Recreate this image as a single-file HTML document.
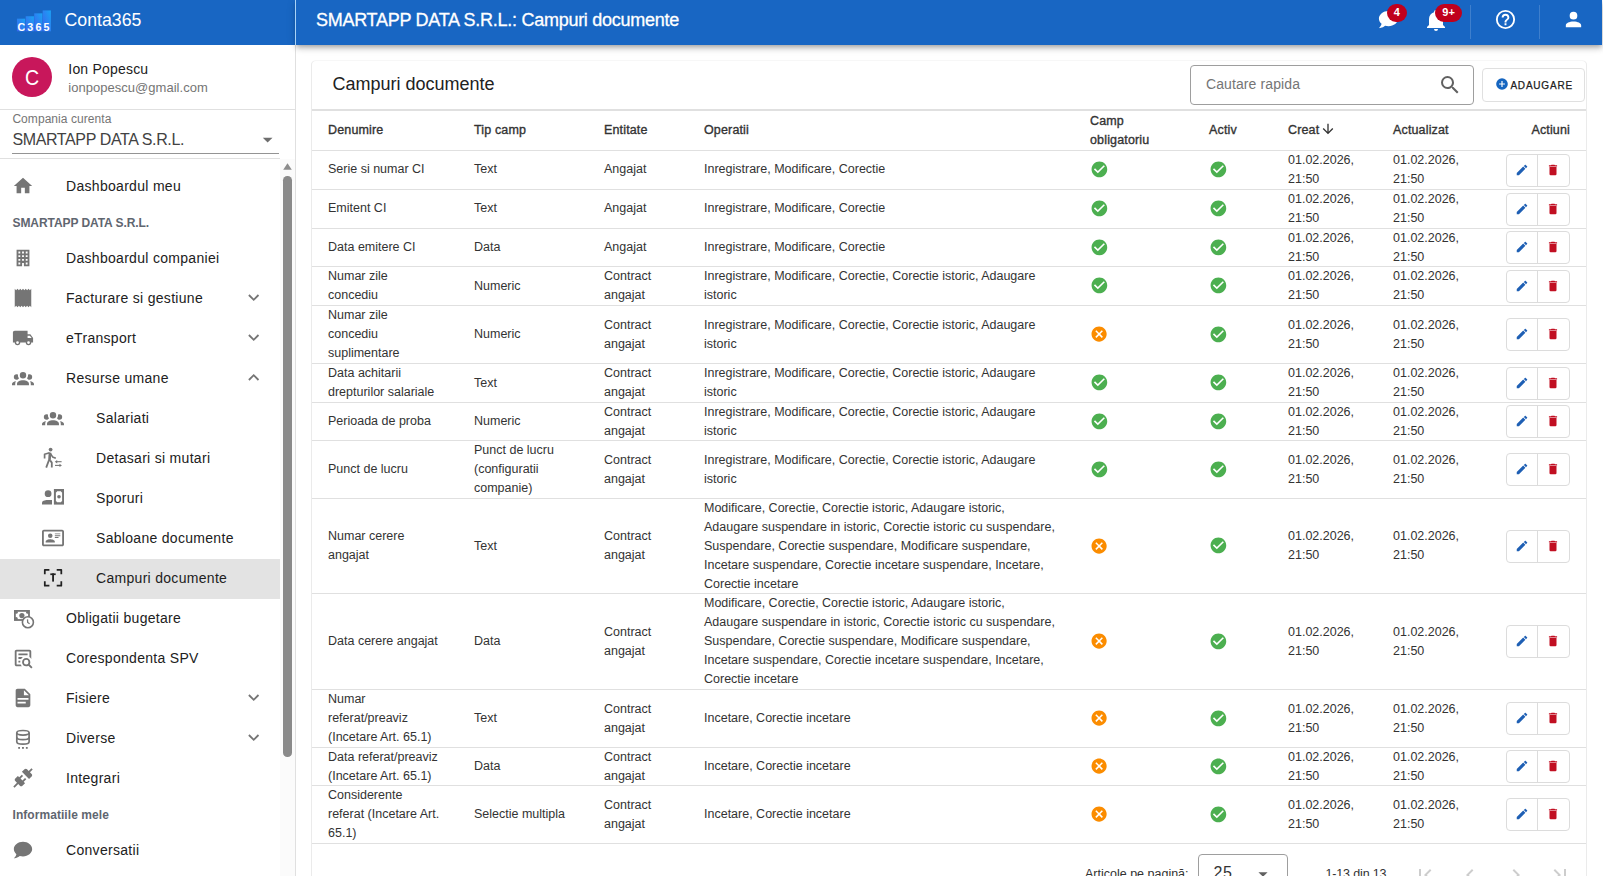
<!DOCTYPE html><html><head><meta charset="utf-8"><style>
html,body{margin:0;padding:0}
body{width:1603px;height:876px;overflow:hidden;position:relative;background:#fff;font-family:"Liberation Sans",sans-serif;}
.ic{position:absolute;display:block}
.t{position:absolute;white-space:nowrap}
.abs{position:absolute}
</style></head><body>
<div class="abs" style="left:0;top:0;width:295px;height:45px;background:#1866c3"></div>
<svg class="ic" style="left:14.9px;top:7.9px;width:36.9px;height:25.25px" viewBox="0 0 38 26">
<defs><linearGradient id="lg" x1="0" y1="1" x2="1" y2="0"><stop offset="0" stop-color="#3b62ee"/><stop offset="1" stop-color="#1aa3f5"/></linearGradient></defs>
<rect x="2" y="11" width="8.5" height="13" fill="url(#lg)"/>
<rect x="11" y="8.5" width="8.5" height="15.5" fill="url(#lg)"/>
<rect x="19.8" y="5.5" width="8.5" height="18.5" fill="url(#lg)"/>
<rect x="28.5" y="2.5" width="8.5" height="21.5" fill="url(#lg)"/>
<text x="2.6" y="23.3" font-family="Liberation Sans" font-weight="700" font-size="11" fill="#fff" letter-spacing="2.2">C365</text>
</svg>
<div class="t" style="left:64.6px;top:11.62px;font-size:17.7px;line-height:17.7px;color:#fff;font-weight:400;letter-spacing:0px;">Conta365</div>
<div class="abs" style="left:12px;top:57px;width:40px;height:40px;border-radius:50%;background:#c8175b"></div>
<div class="t" style="left:24.8px;top:65.80px;font-size:22.8px;line-height:22.8px;color:#fff;font-weight:400;letter-spacing:0px;transform:scaleX(0.86);transform-origin:0 0;">C</div>
<div class="t" style="left:68.3px;top:62.15px;font-size:14px;line-height:14px;color:#212121;font-weight:400;letter-spacing:0.2px;">Ion Popescu</div>
<div class="t" style="left:68.3px;top:81.00px;font-size:13px;line-height:13px;color:#757575;font-weight:400;letter-spacing:0.03px;">ionpopescu@gmail.com</div>
<div class="abs" style="left:0;top:109px;width:295px;height:1px;background:#e0e0e0"></div>
<div class="t" style="left:12.4px;top:112.54px;font-size:12px;line-height:12px;color:#757575;font-weight:400;letter-spacing:0.06px;">Compania curenta</div>
<div class="t" style="left:12.4px;top:132.16px;font-size:16px;line-height:16px;color:#424242;font-weight:400;letter-spacing:-0.37px;">SMARTAPP DATA S.R.L.</div>
<svg class="ic" style="left:255.5px;top:128.1px;width:23.3px;height:23.3px;" viewBox="0 0 24 24"><path fill="#6e6e6e" d="M7,10L12,15L17,10H7Z"/></svg>
<div class="abs" style="left:12px;top:153px;width:267px;height:1px;background:#949494"></div>
<div class="abs" style="left:0;top:158px;width:280px;height:1px;background:#e0e0e0"></div>
<div class="abs" style="left:295px;top:0;width:1px;height:876px;background:#e0e0e0"></div>
<div class="abs" style="left:295px;top:0;width:1px;height:45px;background:#a9d3f7;z-index:5"></div>
<div class="abs" style="left:280px;top:159px;width:15px;height:717px;background:#fbfbfb"></div>
<svg class="ic" style="left:283px;top:163px;width:9px;height:7px" viewBox="0 0 9 7"><path d="M4.5,0.3L8.8,6.7H0.2Z" fill="#8c8c8c"/></svg>
<div class="abs" style="left:283px;top:176px;width:8.6px;height:581px;border-radius:4.3px;background:#8a8a8a"></div>
<div class="abs" style="left:0;top:559px;width:280px;height:40px;background:#e3e3e3"></div>
<svg class="ic" style="left:12px;top:175px;width:22px;height:22px;" viewBox="0 0 24 24"><path fill="#757575" d="M10,20V14H14V20H19V12H22L12,3L2,12H5V20H10Z"/></svg>
<div class="t" style="left:66px;top:179.25px;font-size:14px;line-height:14px;color:#212121;font-weight:400;letter-spacing:0.3px;">Dashboardul meu</div>
<svg class="ic" style="left:12px;top:247px;width:22px;height:22px;" viewBox="0 0 24 24"><path fill="#757575" d="M5,3V21H11V17.5H13V21H19V3H5M7,5H9V7H7V5M11,5H13V7H11V5M15,5H17V7H15V5M7,9H9V11H7V9M11,9H13V11H11V9M15,9H17V11H15V9M7,13H9V15H7V13M11,13H13V15H11V13M15,13H17V15H15V13M7,17H9V19H7V17M15,17H17V19H15V17Z"/></svg>
<div class="t" style="left:66px;top:251.25px;font-size:14px;line-height:14px;color:#212121;font-weight:400;letter-spacing:0.3px;">Dashboardul companiei</div>
<svg class="ic" style="left:12px;top:287px;width:22px;height:22px;" viewBox="0 0 24 24"><path fill="#757575" d="M3,22L4.5,20.5L6,22L7.5,20.5L9,22L10.5,20.5L12,22L13.5,20.5L15,22L16.5,20.5L18,22L19.5,20.5L21,22V2L19.5,3.5L18,2L16.5,3.5L15,2L13.5,3.5L12,2L10.5,3.5L9,2L7.5,3.5L6,2L4.5,3.5L3,2V22Z"/></svg>
<div class="t" style="left:66px;top:291.25px;font-size:14px;line-height:14px;color:#212121;font-weight:400;letter-spacing:0.3px;">Facturare si gestiune</div>
<svg class="ic" style="left:0;top:0;width:295px;height:876px;overflow:visible" viewBox="0 0 295 876"><polyline points="248.9,295.0 253.7,299.8 258.5,295.0" fill="none" stroke="#757575" stroke-width="1.85"/></svg>
<svg class="ic" style="left:12px;top:327px;width:22px;height:22px;" viewBox="0 0 24 24"><path fill="#757575" d="M18,18.5A1.5,1.5 0 0,1 16.5,17A1.5,1.5 0 0,1 18,15.5A1.5,1.5 0 0,1 19.5,17A1.5,1.5 0 0,1 18,18.5M19.5,9.5L21.46,12H17V9.5M6,18.5A1.5,1.5 0 0,1 4.5,17A1.5,1.5 0 0,1 6,15.5A1.5,1.5 0 0,1 7.5,17A1.5,1.5 0 0,1 6,18.5M20,8H17V4H3C1.89,4 1,4.89 1,6V17H3A3,3 0 0,0 6,20A3,3 0 0,0 9,17H15A3,3 0 0,0 18,20A3,3 0 0,0 21,17H23V12L20,8Z"/></svg>
<div class="t" style="left:66px;top:331.25px;font-size:14px;line-height:14px;color:#212121;font-weight:400;letter-spacing:0.3px;">eTransport</div>
<svg class="ic" style="left:0;top:0;width:295px;height:876px;overflow:visible" viewBox="0 0 295 876"><polyline points="248.9,335.0 253.7,339.8 258.5,335.0" fill="none" stroke="#757575" stroke-width="1.85"/></svg>
<svg class="ic" style="left:12px;top:367px;width:22px;height:22px;" viewBox="0 0 24 24"><path fill="#757575" d="M12,5.5A3.5,3.5 0 0,1 15.5,9A3.5,3.5 0 0,1 12,12.5A3.5,3.5 0 0,1 8.5,9A3.5,3.5 0 0,1 12,5.5M5,8C5.56,8 6.08,8.15 6.53,8.42C6.38,9.85 6.8,11.27 7.66,12.38C7.16,13.34 6.16,14 5,14A3,3 0 0,1 2,11A3,3 0 0,1 5,8M19,8A3,3 0 0,1 22,11A3,3 0 0,1 19,14C17.84,14 16.84,13.34 16.34,12.38C17.2,11.27 17.62,9.85 17.47,8.42C17.92,8.15 18.44,8 19,8M5.5,18.25C5.5,16.18 8.41,14.5 12,14.5C15.59,14.5 18.5,16.18 18.5,18.25V20H5.5V18.25M0,20V18.5C0,17.11 1.89,15.94 4.45,15.6C3.86,16.28 3.5,17.22 3.5,18.25V20H0M24,20H20.5V18.25C20.5,17.22 20.14,16.28 19.55,15.6C22.11,15.94 24,17.11 24,18.5V20Z"/></svg>
<div class="t" style="left:66px;top:371.25px;font-size:14px;line-height:14px;color:#212121;font-weight:400;letter-spacing:0.3px;">Resurse umane</div>
<svg class="ic" style="left:0;top:0;width:295px;height:876px;overflow:visible" viewBox="0 0 295 876"><polyline points="248.9,380.0 253.7,375.2 258.5,380.0" fill="none" stroke="#757575" stroke-width="1.85"/></svg>
<svg class="ic" style="left:42px;top:407px;width:22px;height:22px;" viewBox="0 0 24 24"><path fill="#757575" d="M12,5.5A3.5,3.5 0 0,1 15.5,9A3.5,3.5 0 0,1 12,12.5A3.5,3.5 0 0,1 8.5,9A3.5,3.5 0 0,1 12,5.5M5,8C5.56,8 6.08,8.15 6.53,8.42C6.38,9.85 6.8,11.27 7.66,12.38C7.16,13.34 6.16,14 5,14A3,3 0 0,1 2,11A3,3 0 0,1 5,8M19,8A3,3 0 0,1 22,11A3,3 0 0,1 19,14C17.84,14 16.84,13.34 16.34,12.38C17.2,11.27 17.62,9.85 17.47,8.42C17.92,8.15 18.44,8 19,8M5.5,18.25C5.5,16.18 8.41,14.5 12,14.5C15.59,14.5 18.5,16.18 18.5,18.25V20H5.5V18.25M0,20V18.5C0,17.11 1.89,15.94 4.45,15.6C3.86,16.28 3.5,17.22 3.5,18.25V20H0M24,20H20.5V18.25C20.5,17.22 20.14,16.28 19.55,15.6C22.11,15.94 24,17.11 24,18.5V20Z"/></svg>
<div class="t" style="left:96px;top:411.25px;font-size:14px;line-height:14px;color:#212121;font-weight:400;letter-spacing:0.3px;">Salariati</div>
<svg class="ic" style="left:0;top:0;width:295px;height:876px" viewBox="0 0 295 876"><circle cx="50.6" cy="449.6" r="1.9" fill="#757575"/>
<g fill="none" stroke="#757575" stroke-linejoin="round" stroke-linecap="butt">
<polyline points="44.6,458.5 44.6,454.2 49.6,452.8" stroke-width="1.7"/>
<polyline points="50.2,453.2 52.6,456.9 55.8,458.3" stroke-width="1.6"/>
<line x1="50" y1="452.6" x2="49.4" y2="461.2" stroke-width="2.6"/>
<polyline points="48.8,460.6 46.2,467.6" stroke-width="1.8"/>
<polyline points="50.3,460.6 51.8,462.6 51.8,467.6" stroke-width="1.8"/>
<line x1="56.6" y1="461.7" x2="61.6" y2="461.7" stroke-width="1.1"/>
<line x1="55" y1="465.4" x2="60.2" y2="465.4" stroke-width="1.1"/>
</g>
<path d="M54.8,461.7L57.2,460V463.4Z M61.9,465.4L59.5,463.7V467.1Z" fill="#757575"/></svg>
<div class="t" style="left:96px;top:451.25px;font-size:14px;line-height:14px;color:#212121;font-weight:400;letter-spacing:0.3px;">Detasari si mutari</div>
<svg class="ic" style="left:0;top:0;width:295px;height:876px" viewBox="0 0 295 876"><circle cx="48.1" cy="493.7" r="3.4" fill="#757575"/>
<path d="M42,504.6V502.8C42,500.8 44.6,499.9 47.5,499.9H52V504.6Z" fill="#757575"/>
<rect x="53.9" y="489" width="10.1" height="15.6" fill="#757575"/>
<path d="M55.9,492.4Q57,492.4 57,491.3H61Q61,492.4 62.1,492.4V501.2Q61,501.2 61,502.3H57Q57,501.2 55.9,501.2Z" fill="#fff"/>
<circle cx="59" cy="496.8" r="1.8" fill="#757575"/></svg>
<div class="t" style="left:96px;top:491.25px;font-size:14px;line-height:14px;color:#212121;font-weight:400;letter-spacing:0.3px;">Sporuri</div>
<svg class="ic" style="left:42px;top:527px;width:22px;height:22px;" viewBox="0 0 24 24"><path fill="#757575" d="M22,3H2C0.91,3.04 0.04,3.91 0,5V19C0.04,20.09 0.91,20.96 2,21H22C23.09,20.96 23.96,20.09 24,19V5C23.96,3.91 23.09,3.04 22,3M22,19H2V5H22V19M14,17V15.75C14,14.09 10.66,13.25 9,13.25C7.34,13.25 4,14.09 4,15.75V17H14M9,7A2.5,2.5 0 0,0 6.5,9.5A2.5,2.5 0 0,0 9,12A2.5,2.5 0 0,0 11.5,9.5A2.5,2.5 0 0,0 9,7M14,7V8H20V7H14M14,9V10H20V9H14M14,11V12H18V11H14Z"/></svg>
<div class="t" style="left:96px;top:531.25px;font-size:14px;line-height:14px;color:#212121;font-weight:400;letter-spacing:0.3px;">Sabloane documente</div>
<svg class="ic" style="left:0;top:0;width:295px;height:876px" viewBox="0 0 295 876"><g fill="none" stroke="#212121" stroke-width="1.75" stroke-linecap="butt" stroke-linejoin="round">
<path d="M44.8,574.3V569.8H49.4"/><path d="M56.7,569.8H61.3V574.3"/>
<path d="M44.8,581.2V585.7H49.4"/><path d="M56.7,585.7H61.3V581.2"/></g>
<rect x="50.3" y="573.4" width="5.4" height="1.7" fill="#212121"/><rect x="52.15" y="573.4" width="1.85" height="8.2" fill="#212121"/></svg>
<div class="t" style="left:96px;top:571.25px;font-size:14px;line-height:14px;color:#212121;font-weight:400;letter-spacing:0.3px;">Campuri documente</div>
<svg class="ic" style="left:0;top:0;width:295px;height:876px" viewBox="0 0 295 876"><rect x="14.9" y="610.9" width="14.1" height="9.1" fill="none" stroke="#757575" stroke-width="1.8"/>
<circle cx="16.2" cy="612.2" r="1.6" fill="#757575"/><circle cx="27.7" cy="612.2" r="1.6" fill="#757575"/><circle cx="16.2" cy="618.7" r="1.6" fill="#757575"/>
<circle cx="21.9" cy="615.6" r="2.6" fill="#757575"/>
<circle cx="27.9" cy="622.2" r="5.5" fill="#fff" stroke="#757575" stroke-width="1.6"/>
<polyline points="27.5,619.4 27.7,622.5 29.6,623.7" fill="none" stroke="#757575" stroke-width="1.3"/></svg>
<div class="t" style="left:66px;top:611.25px;font-size:14px;line-height:14px;color:#212121;font-weight:400;letter-spacing:0.3px;">Obligatii bugetare</div>
<svg class="ic" style="left:12px;top:647px;width:22px;height:22px;" viewBox="0 0 24 24"><path fill="#757575" d="M15.5,12C18,12 20,14 20,16.5C20,17.38 19.75,18.21 19.31,18.9L22.39,22L21,23.39L17.88,20.32C17.19,20.75 16.37,21 15.5,21C13,21 11,19 11,16.5C11,14 13,12 15.5,12M15.5,14A2.5,2.5 0 0,0 13,16.5A2.5,2.5 0 0,0 15.5,19A2.5,2.5 0 0,0 18,16.5A2.5,2.5 0 0,0 15.5,14M5,3H19C20.11,3 21,3.89 21,5V13.03C20.5,12.23 19.81,11.54 19,11V5H5V19H9.5C9.81,19.75 10.26,20.42 10.81,21H5C3.89,21 3,20.11 3,19V5C3,3.89 3.89,3 5,3M7,7H17V9H7V7M7,11H12.03C11.23,11.5 10.54,12.19 10,13H7V11M7,15H9.17C9.06,15.5 9,16 9,16.5V17H7V15Z"/></svg>
<div class="t" style="left:66px;top:651.25px;font-size:14px;line-height:14px;color:#212121;font-weight:400;letter-spacing:0.3px;">Corespondenta SPV</div>
<svg class="ic" style="left:12px;top:687px;width:22px;height:22px;" viewBox="0 0 24 24"><path fill="#757575" d="M6,2H14L20,8V20A2,2 0 0,1 18,22H6C4.89,22 4,21.1 4,20V4C4,2.89 4.89,2 6,2M13,3.5V9H18.5L13,3.5M15,18V16H6V18H15M18,14V12H6V14H18Z"/></svg>
<div class="t" style="left:66px;top:691.25px;font-size:14px;line-height:14px;color:#212121;font-weight:400;letter-spacing:0.3px;">Fisiere</div>
<svg class="ic" style="left:0;top:0;width:295px;height:876px;overflow:visible" viewBox="0 0 295 876"><polyline points="248.9,695.0 253.7,699.8 258.5,695.0" fill="none" stroke="#757575" stroke-width="1.85"/></svg>
<svg class="ic" style="left:0;top:0;width:295px;height:876px" viewBox="0 0 295 876"><g fill="none" stroke="#757575" stroke-width="1.7">
<ellipse cx="22.95" cy="732.8" rx="6.15" ry="2.3"/>
<path d="M16.8,732.8V741.8A6.15,2.4 0 0 0 29.1,741.8V732.8"/>
<path d="M16.8,737.2A6.15,2.4 0 0 0 29.1,737.2"/></g>
<rect x="18.2" y="747" width="1.8" height="1.8" fill="#757575"/><rect x="22" y="747" width="1.9" height="1.8" fill="#757575"/><rect x="25.9" y="747" width="1.8" height="1.8" fill="#757575"/></svg>
<div class="t" style="left:66px;top:731.25px;font-size:14px;line-height:14px;color:#212121;font-weight:400;letter-spacing:0.3px;">Diverse</div>
<svg class="ic" style="left:0;top:0;width:295px;height:876px;overflow:visible" viewBox="0 0 295 876"><polyline points="248.9,735.0 253.7,739.8 258.5,735.0" fill="none" stroke="#757575" stroke-width="1.85"/></svg>
<svg class="ic" style="left:12px;top:767px;width:22px;height:22px;" viewBox="0 0 24 24"><path fill="#757575" d="M21.4,7.5C22.2,8.3 22.2,9.6 21.4,10.3L18.6,13.1L10.8,5.3L13.6,2.5C14.4,1.7 15.7,1.7 16.4,2.5L18.2,4.3L21.2,1.3L22.6,2.7L19.6,5.7L21.4,7.5M15.6,13.3L14.2,11.9L11.4,14.7L9.3,12.6L12.1,9.8L10.7,8.4L7.9,11.2L6.4,9.8L3.6,12.6C2.8,13.4 2.8,14.7 3.6,15.4L5.4,17.2L1.4,21.2L2.8,22.6L6.8,18.6L8.6,20.4C9.4,21.2 10.7,21.2 11.4,20.4L14.2,17.6L12.8,16.2L15.6,13.3Z"/></svg>
<div class="t" style="left:66px;top:771.25px;font-size:14px;line-height:14px;color:#212121;font-weight:400;letter-spacing:0.3px;">Integrari</div>
<svg class="ic" style="left:12px;top:839px;width:22px;height:22px;" viewBox="0 0 24 24"><path fill="#757575" d="M12,3C17.5,3 22,6.58 22,11C22,15.42 17.5,19 12,19C10.76,19 9.57,18.82 8.47,18.5C5.55,21 2,21 2,21C4.33,18.67 4.7,17.1 4.75,16.5C3.05,15.07 2,13.13 2,11C2,6.58 6.5,3 12,3Z"/></svg>
<div class="t" style="left:66px;top:843.25px;font-size:14px;line-height:14px;color:#212121;font-weight:400;letter-spacing:0.3px;">Conversatii</div>
<div class="t" style="left:12.5px;top:216.64px;font-size:12px;line-height:12px;color:#5f6670;font-weight:700;letter-spacing:-0.07px;">SMARTAPP DATA S.R.L.</div>
<div class="t" style="left:12.5px;top:808.54px;font-size:12px;line-height:12px;color:#5f6670;font-weight:700;letter-spacing:0.06px;">Informatiile mele</div>
<div class="abs" style="left:296px;top:0;width:1306px;height:45px;background:#1866c3;box-shadow:0 2px 4px -1px rgba(0,0,0,.2),0 4px 5px 0 rgba(0,0,0,.14),0 1px 10px 0 rgba(0,0,0,.12);z-index:2"></div>
<div style="position:absolute;left:0;top:0;z-index:3">
<div class="t" style="left:316px;top:10.56px;font-size:18px;line-height:18px;color:#fff;font-weight:400;letter-spacing:-0.27px;-webkit-text-stroke:0.3px #fff;">SMARTAPP DATA S.R.L.: Campuri documente</div>
<svg class="ic" style="left:1376.8px;top:8.0px;width:23px;height:23px;" viewBox="0 0 24 24"><path fill="#fff" d="M12,3C17.5,3 22,6.58 22,11C22,15.42 17.5,19 12,19C10.76,19 9.57,18.82 8.47,18.5C5.55,21 2,21 2,21C4.33,18.67 4.7,17.1 4.75,16.5C3.05,15.07 2,13.13 2,11C2,6.58 6.5,3 12,3Z"/></svg>
<div class="abs" style="left:1387.2px;top:3.7px;width:19.6px;height:18.4px;border-radius:9.2px;background:#c0001c;color:#fff;font-size:11px;font-weight:700;text-align:center;line-height:16.6px;text-indent:-0.6px">4</div>
<svg class="ic" style="left:1424px;top:8px;width:24px;height:24px;" viewBox="0 0 24 24"><path fill="#fff" d="M21,19V20H3V19L5,17V11C5,7.9 7.03,5.17 10,4.29C10,4.19 10,4.1 10,4A2,2 0 0,1 12,2A2,2 0 0,1 14,4C14,4.1 14,4.19 14,4.29C16.97,5.17 19,7.9 19,11V17L21,19M14,21A2,2 0 0,1 12,23A2,2 0 0,1 10,21"/></svg>
<div class="abs" style="left:1435.2px;top:3.7px;width:26.8px;height:18.4px;border-radius:9.2px;background:#c0001c;color:#fff;font-size:11px;font-weight:700;text-align:center;line-height:16.6px">9+</div>
<div class="abs" style="left:1470px;top:4.5px;width:1px;height:34.5px;background:rgba(255,255,255,.17)"></div>
<svg class="ic" style="left:1493.8px;top:8.1px;width:23px;height:23px;" viewBox="0 0 24 24"><path fill="#fff" d="M11,18H13V16H11V18M12,2A10,10 0 0,0 2,12A10,10 0 0,0 12,22A10,10 0 0,0 22,12A10,10 0 0,0 12,2M12,20C7.59,20 4,16.41 4,12C4,7.59 7.59,4 12,4C16.41,4 20,7.59 20,12C20,16.41 16.41,20 12,20M12,6A4,4 0 0,0 8,10H10A2,2 0 0,1 12,8A2,2 0 0,1 14,10C14,12 11,11.75 11,15H13C13,12.75 16,12.5 16,10A4,4 0 0,0 12,6Z"/></svg>
<div class="abs" style="left:1539px;top:4.5px;width:1px;height:34.5px;background:rgba(255,255,255,.17)"></div>
<svg class="ic" style="left:1562.2px;top:8.1px;width:23px;height:23px;" viewBox="0 0 24 24"><path fill="#fff" d="M12,4A4,4 0 0,1 16,8A4,4 0 0,1 12,12A4,4 0 0,1 8,8A4,4 0 0,1 12,4M12,14C16.42,14 20,15.79 20,18V20H4V18C4,15.79 7.58,14 12,14Z"/></svg>
</div>
<div class="abs" style="left:312px;top:61px;width:1274px;height:830px;border-radius:4px;background:#fff;box-shadow:-1px 0 0 #ebebeb,1px 0 0 #ebebeb,0 -1px 0 #f7f7f7"></div>
<div class="t" style="left:332.5px;top:74.66px;font-size:18px;line-height:18px;color:#212121;font-weight:400;letter-spacing:0px;">Campuri documente</div>
<div class="abs" style="left:1190px;top:65px;width:282px;height:38px;border:1px solid #9e9e9e;border-radius:4px"></div>
<div class="t" style="left:1206px;top:77.15px;font-size:14px;line-height:14px;color:#757575;font-weight:400;letter-spacing:0.1px;">Cautare rapida</div>
<svg class="ic" style="left:1438px;top:73px;width:24px;height:24px;" viewBox="0 0 24 24"><path fill="#616161" d="M9.5,3A6.5,6.5 0 0,1 16,9.5C16,11.11 15.41,12.59 14.44,13.73L14.71,14H15.5L20.5,19L19,20.5L14,15.5V14.71L13.73,14.44C12.59,15.41 11.11,16 9.5,16A6.5,6.5 0 0,1 3,9.5A6.5,6.5 0 0,1 9.5,3M9.5,5C7,5 5,7 5,9.5C5,12 7,14 9.5,14C12,14 14,12 14,9.5C14,7 12,5 9.5,5Z"/></svg>
<div class="abs" style="left:1482px;top:68px;width:101px;height:32px;border:1px solid #e0e0e0;border-radius:4px"></div>
<svg class="ic" style="left:1494.9px;top:76.9px;width:14px;height:14px;" viewBox="0 0 24 24"><path fill="#1565c0" d="M17,13H13V17H11V13H7V11H11V7H13V11H17M12,2A10,10 0 0,0 2,12A10,10 0 0,0 12,22A10,10 0 0,0 22,12A10,10 0 0,0 12,2Z"/></svg>
<div class="t" style="left:1510.4px;top:81.13px;font-size:10px;line-height:10px;color:#212121;font-weight:400;letter-spacing:0.8px;-webkit-text-stroke:0.25px #212121;">ADAUGARE</div>
<div class="abs" style="left:312px;top:109px;width:1274px;height:2px;background:#e0e0e0"></div>
<div class="abs" style="left:328px;top:111px;height:39px;display:flex;align-items:center;white-space:nowrap;font-size:12.5px;line-height:19px;color:#333;-webkit-text-stroke:0.35px #333;letter-spacing:0.15px"><div>Denumire</div></div>
<div class="abs" style="left:474px;top:111px;height:39px;display:flex;align-items:center;white-space:nowrap;font-size:12.5px;line-height:19px;color:#333;-webkit-text-stroke:0.35px #333;letter-spacing:0.15px"><div>Tip camp</div></div>
<div class="abs" style="left:604px;top:111px;height:39px;display:flex;align-items:center;white-space:nowrap;font-size:12.5px;line-height:19px;color:#333;-webkit-text-stroke:0.35px #333;letter-spacing:0.15px"><div>Entitate</div></div>
<div class="abs" style="left:704px;top:111px;height:39px;display:flex;align-items:center;white-space:nowrap;font-size:12.5px;line-height:19px;color:#333;-webkit-text-stroke:0.35px #333;letter-spacing:0.15px"><div>Operatii</div></div>
<div class="abs" style="left:1090px;top:111px;height:39px;display:flex;align-items:center;white-space:nowrap;font-size:12.5px;line-height:19px;color:#333;-webkit-text-stroke:0.35px #333;letter-spacing:0.15px"><div>Camp<br>obligatoriu</div></div>
<div class="abs" style="left:1209px;top:111px;height:39px;display:flex;align-items:center;white-space:nowrap;font-size:12.5px;line-height:19px;color:#333;-webkit-text-stroke:0.35px #333;letter-spacing:0.15px"><div>Activ</div></div>
<div class="abs" style="left:1288px;top:111px;height:39px;display:flex;align-items:center;white-space:nowrap;font-size:12.5px;line-height:19px;color:#333;-webkit-text-stroke:0.35px #333;letter-spacing:0.15px"><div>Creat</div></div>
<div class="abs" style="left:1393px;top:111px;height:39px;display:flex;align-items:center;white-space:nowrap;font-size:12.5px;line-height:19px;color:#333;-webkit-text-stroke:0.35px #333;letter-spacing:0.15px"><div>Actualizat</div></div>
<svg class="ic" style="left:1320px;top:121px;width:16px;height:16px;" viewBox="0 0 24 24"><path fill="#333" d="M11,4H13V16L18.5,10.5L19.92,11.92L12,19.84L4.08,11.92L5.5,10.5L11,16V4Z"/></svg>
<div class="abs" style="left:1470px;top:111px;width:100px;height:39px;display:flex;align-items:center;justify-content:flex-end;white-space:nowrap;font-size:12.5px;line-height:19px;color:#333;-webkit-text-stroke:0.35px #333;letter-spacing:0.15px">Actiuni</div>
<div class="abs" style="left:312px;top:150px;width:1274px;height:1px;background:#e0e0e0"></div>
<div class="abs" style="left:328px;top:150px;height:38px;display:flex;align-items:center;white-space:nowrap;font-size:12.5px;line-height:19px;color:#333"><div>Serie si numar CI</div></div>
<div class="abs" style="left:474px;top:150px;height:38px;display:flex;align-items:center;white-space:nowrap;font-size:12.5px;line-height:19px;color:#333"><div>Text</div></div>
<div class="abs" style="left:604px;top:150px;height:38px;display:flex;align-items:center;white-space:nowrap;font-size:12.5px;line-height:19px;color:#333"><div>Angajat</div></div>
<div class="abs" style="left:704px;top:150px;height:38px;display:flex;align-items:center;white-space:nowrap;font-size:12.5px;line-height:19px;color:#333"><div>Inregistrare, Modificare, Corectie</div></div>
<svg class="ic" style="left:1089.8999999999999px;top:160.4px;width:18.8px;height:18.8px;" viewBox="0 0 24 24"><path fill="#4caf50" d="M12 2C6.5 2 2 6.5 2 12S6.5 22 12 22 22 17.5 22 12 17.5 2 12 2M10 17L5 12L6.41 10.59L10 14.17L17.59 6.58L19 8L10 17Z"/></svg>
<svg class="ic" style="left:1209.1px;top:160.4px;width:18.8px;height:18.8px;" viewBox="0 0 24 24"><path fill="#4caf50" d="M12 2C6.5 2 2 6.5 2 12S6.5 22 12 22 22 17.5 22 12 17.5 2 12 2M10 17L5 12L6.41 10.59L10 14.17L17.59 6.58L19 8L10 17Z"/></svg>
<div class="abs" style="left:1288px;top:151px;height:38px;display:flex;align-items:center;white-space:nowrap;font-size:12.5px;line-height:19px;color:#333"><div>01.02.2026,<br>21:50</div></div>
<div class="abs" style="left:1393px;top:151px;height:38px;display:flex;align-items:center;white-space:nowrap;font-size:12.5px;line-height:19px;color:#333"><div>01.02.2026,<br>21:50</div></div>
<div class="abs" style="left:1506px;top:153.5px;width:62px;height:31px;border:1px solid #dcdcdc;border-radius:4px"></div>
<div class="abs" style="left:1537px;top:153.5px;width:1px;height:33px;background:#dcdcdc"></div>
<svg class="ic" style="left:1515px;top:162.5px;width:14px;height:14px;" viewBox="0 0 24 24"><path fill="#1e5fb4" d="M20.71,7.04C21.1,6.65 21.1,6 20.71,5.63L18.37,3.29C18,2.9 17.35,2.9 16.96,3.29L15.12,5.12L18.87,8.87M3,17.25V21H6.75L17.81,9.93L14.06,6.18L3,17.25Z"/></svg>
<svg class="ic" style="left:1546px;top:162.5px;width:14px;height:14px;" viewBox="0 0 24 24"><path fill="#c10f22" d="M19,4H15.5L14.5,3H9.5L8.5,4H5V6H19M6,19A2,2 0 0,0 8,21H16A2,2 0 0,0 18,19V7H6V19Z"/></svg>
<div class="abs" style="left:312px;top:189px;width:1274px;height:1px;background:#e0e0e0"></div>
<div class="abs" style="left:328px;top:189px;height:38px;display:flex;align-items:center;white-space:nowrap;font-size:12.5px;line-height:19px;color:#333"><div>Emitent CI</div></div>
<div class="abs" style="left:474px;top:189px;height:38px;display:flex;align-items:center;white-space:nowrap;font-size:12.5px;line-height:19px;color:#333"><div>Text</div></div>
<div class="abs" style="left:604px;top:189px;height:38px;display:flex;align-items:center;white-space:nowrap;font-size:12.5px;line-height:19px;color:#333"><div>Angajat</div></div>
<div class="abs" style="left:704px;top:189px;height:38px;display:flex;align-items:center;white-space:nowrap;font-size:12.5px;line-height:19px;color:#333"><div>Inregistrare, Modificare, Corectie</div></div>
<svg class="ic" style="left:1089.8999999999999px;top:199.4px;width:18.8px;height:18.8px;" viewBox="0 0 24 24"><path fill="#4caf50" d="M12 2C6.5 2 2 6.5 2 12S6.5 22 12 22 22 17.5 22 12 17.5 2 12 2M10 17L5 12L6.41 10.59L10 14.17L17.59 6.58L19 8L10 17Z"/></svg>
<svg class="ic" style="left:1209.1px;top:199.4px;width:18.8px;height:18.8px;" viewBox="0 0 24 24"><path fill="#4caf50" d="M12 2C6.5 2 2 6.5 2 12S6.5 22 12 22 22 17.5 22 12 17.5 2 12 2M10 17L5 12L6.41 10.59L10 14.17L17.59 6.58L19 8L10 17Z"/></svg>
<div class="abs" style="left:1288px;top:190px;height:38px;display:flex;align-items:center;white-space:nowrap;font-size:12.5px;line-height:19px;color:#333"><div>01.02.2026,<br>21:50</div></div>
<div class="abs" style="left:1393px;top:190px;height:38px;display:flex;align-items:center;white-space:nowrap;font-size:12.5px;line-height:19px;color:#333"><div>01.02.2026,<br>21:50</div></div>
<div class="abs" style="left:1506px;top:192.5px;width:62px;height:31px;border:1px solid #dcdcdc;border-radius:4px"></div>
<div class="abs" style="left:1537px;top:192.5px;width:1px;height:33px;background:#dcdcdc"></div>
<svg class="ic" style="left:1515px;top:201.5px;width:14px;height:14px;" viewBox="0 0 24 24"><path fill="#1e5fb4" d="M20.71,7.04C21.1,6.65 21.1,6 20.71,5.63L18.37,3.29C18,2.9 17.35,2.9 16.96,3.29L15.12,5.12L18.87,8.87M3,17.25V21H6.75L17.81,9.93L14.06,6.18L3,17.25Z"/></svg>
<svg class="ic" style="left:1546px;top:201.5px;width:14px;height:14px;" viewBox="0 0 24 24"><path fill="#c10f22" d="M19,4H15.5L14.5,3H9.5L8.5,4H5V6H19M6,19A2,2 0 0,0 8,21H16A2,2 0 0,0 18,19V7H6V19Z"/></svg>
<div class="abs" style="left:312px;top:228px;width:1274px;height:1px;background:#e0e0e0"></div>
<div class="abs" style="left:328px;top:229px;height:37px;display:flex;align-items:center;white-space:nowrap;font-size:12.5px;line-height:19px;color:#333"><div>Data emitere CI</div></div>
<div class="abs" style="left:474px;top:229px;height:37px;display:flex;align-items:center;white-space:nowrap;font-size:12.5px;line-height:19px;color:#333"><div>Data</div></div>
<div class="abs" style="left:604px;top:229px;height:37px;display:flex;align-items:center;white-space:nowrap;font-size:12.5px;line-height:19px;color:#333"><div>Angajat</div></div>
<div class="abs" style="left:704px;top:229px;height:37px;display:flex;align-items:center;white-space:nowrap;font-size:12.5px;line-height:19px;color:#333"><div>Inregistrare, Modificare, Corectie</div></div>
<svg class="ic" style="left:1089.8999999999999px;top:237.9px;width:18.8px;height:18.8px;" viewBox="0 0 24 24"><path fill="#4caf50" d="M12 2C6.5 2 2 6.5 2 12S6.5 22 12 22 22 17.5 22 12 17.5 2 12 2M10 17L5 12L6.41 10.59L10 14.17L17.59 6.58L19 8L10 17Z"/></svg>
<svg class="ic" style="left:1209.1px;top:237.9px;width:18.8px;height:18.8px;" viewBox="0 0 24 24"><path fill="#4caf50" d="M12 2C6.5 2 2 6.5 2 12S6.5 22 12 22 22 17.5 22 12 17.5 2 12 2M10 17L5 12L6.41 10.59L10 14.17L17.59 6.58L19 8L10 17Z"/></svg>
<div class="abs" style="left:1288px;top:229px;height:37px;display:flex;align-items:center;white-space:nowrap;font-size:12.5px;line-height:19px;color:#333"><div>01.02.2026,<br>21:50</div></div>
<div class="abs" style="left:1393px;top:229px;height:37px;display:flex;align-items:center;white-space:nowrap;font-size:12.5px;line-height:19px;color:#333"><div>01.02.2026,<br>21:50</div></div>
<div class="abs" style="left:1506px;top:231.0px;width:62px;height:31px;border:1px solid #dcdcdc;border-radius:4px"></div>
<div class="abs" style="left:1537px;top:231.0px;width:1px;height:33px;background:#dcdcdc"></div>
<svg class="ic" style="left:1515px;top:240.0px;width:14px;height:14px;" viewBox="0 0 24 24"><path fill="#1e5fb4" d="M20.71,7.04C21.1,6.65 21.1,6 20.71,5.63L18.37,3.29C18,2.9 17.35,2.9 16.96,3.29L15.12,5.12L18.87,8.87M3,17.25V21H6.75L17.81,9.93L14.06,6.18L3,17.25Z"/></svg>
<svg class="ic" style="left:1546px;top:240.0px;width:14px;height:14px;" viewBox="0 0 24 24"><path fill="#c10f22" d="M19,4H15.5L14.5,3H9.5L8.5,4H5V6H19M6,19A2,2 0 0,0 8,21H16A2,2 0 0,0 18,19V7H6V19Z"/></svg>
<div class="abs" style="left:312px;top:266px;width:1274px;height:1px;background:#e0e0e0"></div>
<div class="abs" style="left:328px;top:267px;height:38px;display:flex;align-items:center;white-space:nowrap;font-size:12.5px;line-height:19px;color:#333"><div>Numar zile<br>concediu</div></div>
<div class="abs" style="left:474px;top:267px;height:38px;display:flex;align-items:center;white-space:nowrap;font-size:12.5px;line-height:19px;color:#333"><div>Numeric</div></div>
<div class="abs" style="left:604px;top:267px;height:38px;display:flex;align-items:center;white-space:nowrap;font-size:12.5px;line-height:19px;color:#333"><div>Contract<br>angajat</div></div>
<div class="abs" style="left:704px;top:267px;height:38px;display:flex;align-items:center;white-space:nowrap;font-size:12.5px;line-height:19px;color:#333"><div>Inregistrare, Modificare, Corectie, Corectie istoric, Adaugare<br>istoric</div></div>
<svg class="ic" style="left:1089.8999999999999px;top:276.4px;width:18.8px;height:18.8px;" viewBox="0 0 24 24"><path fill="#4caf50" d="M12 2C6.5 2 2 6.5 2 12S6.5 22 12 22 22 17.5 22 12 17.5 2 12 2M10 17L5 12L6.41 10.59L10 14.17L17.59 6.58L19 8L10 17Z"/></svg>
<svg class="ic" style="left:1209.1px;top:276.4px;width:18.8px;height:18.8px;" viewBox="0 0 24 24"><path fill="#4caf50" d="M12 2C6.5 2 2 6.5 2 12S6.5 22 12 22 22 17.5 22 12 17.5 2 12 2M10 17L5 12L6.41 10.59L10 14.17L17.59 6.58L19 8L10 17Z"/></svg>
<div class="abs" style="left:1288px;top:267px;height:38px;display:flex;align-items:center;white-space:nowrap;font-size:12.5px;line-height:19px;color:#333"><div>01.02.2026,<br>21:50</div></div>
<div class="abs" style="left:1393px;top:267px;height:38px;display:flex;align-items:center;white-space:nowrap;font-size:12.5px;line-height:19px;color:#333"><div>01.02.2026,<br>21:50</div></div>
<div class="abs" style="left:1506px;top:269.5px;width:62px;height:31px;border:1px solid #dcdcdc;border-radius:4px"></div>
<div class="abs" style="left:1537px;top:269.5px;width:1px;height:33px;background:#dcdcdc"></div>
<svg class="ic" style="left:1515px;top:278.5px;width:14px;height:14px;" viewBox="0 0 24 24"><path fill="#1e5fb4" d="M20.71,7.04C21.1,6.65 21.1,6 20.71,5.63L18.37,3.29C18,2.9 17.35,2.9 16.96,3.29L15.12,5.12L18.87,8.87M3,17.25V21H6.75L17.81,9.93L14.06,6.18L3,17.25Z"/></svg>
<svg class="ic" style="left:1546px;top:278.5px;width:14px;height:14px;" viewBox="0 0 24 24"><path fill="#c10f22" d="M19,4H15.5L14.5,3H9.5L8.5,4H5V6H19M6,19A2,2 0 0,0 8,21H16A2,2 0 0,0 18,19V7H6V19Z"/></svg>
<div class="abs" style="left:312px;top:305px;width:1274px;height:1px;background:#e0e0e0"></div>
<div class="abs" style="left:328px;top:306px;height:57px;display:flex;align-items:center;white-space:nowrap;font-size:12.5px;line-height:19px;color:#333"><div>Numar zile<br>concediu<br>suplimentare</div></div>
<div class="abs" style="left:474px;top:306px;height:57px;display:flex;align-items:center;white-space:nowrap;font-size:12.5px;line-height:19px;color:#333"><div>Numeric</div></div>
<div class="abs" style="left:604px;top:306px;height:57px;display:flex;align-items:center;white-space:nowrap;font-size:12.5px;line-height:19px;color:#333"><div>Contract<br>angajat</div></div>
<div class="abs" style="left:704px;top:306px;height:57px;display:flex;align-items:center;white-space:nowrap;font-size:12.5px;line-height:19px;color:#333"><div>Inregistrare, Modificare, Corectie, Corectie istoric, Adaugare<br>istoric</div></div>
<svg class="ic" style="left:1090.2px;top:325.0px;width:18.2px;height:18.2px;" viewBox="0 0 24 24"><path fill="#fb8c00" d="M12,2C17.53,2 22,6.47 22,12C22,17.53 17.53,22 12,22C6.47,22 2,17.53 2,12C2,6.47 6.47,2 12,2M15.59,7L12,10.59L8.41,7L7,8.41L10.59,12L7,15.59L8.41,17L12,13.41L15.59,17L17,15.59L13.41,12L17,8.41L15.59,7Z"/></svg>
<svg class="ic" style="left:1209.1px;top:324.9px;width:18.8px;height:18.8px;" viewBox="0 0 24 24"><path fill="#4caf50" d="M12 2C6.5 2 2 6.5 2 12S6.5 22 12 22 22 17.5 22 12 17.5 2 12 2M10 17L5 12L6.41 10.59L10 14.17L17.59 6.58L19 8L10 17Z"/></svg>
<div class="abs" style="left:1288px;top:306px;height:57px;display:flex;align-items:center;white-space:nowrap;font-size:12.5px;line-height:19px;color:#333"><div>01.02.2026,<br>21:50</div></div>
<div class="abs" style="left:1393px;top:306px;height:57px;display:flex;align-items:center;white-space:nowrap;font-size:12.5px;line-height:19px;color:#333"><div>01.02.2026,<br>21:50</div></div>
<div class="abs" style="left:1506px;top:318.0px;width:62px;height:31px;border:1px solid #dcdcdc;border-radius:4px"></div>
<div class="abs" style="left:1537px;top:318.0px;width:1px;height:33px;background:#dcdcdc"></div>
<svg class="ic" style="left:1515px;top:327.0px;width:14px;height:14px;" viewBox="0 0 24 24"><path fill="#1e5fb4" d="M20.71,7.04C21.1,6.65 21.1,6 20.71,5.63L18.37,3.29C18,2.9 17.35,2.9 16.96,3.29L15.12,5.12L18.87,8.87M3,17.25V21H6.75L17.81,9.93L14.06,6.18L3,17.25Z"/></svg>
<svg class="ic" style="left:1546px;top:327.0px;width:14px;height:14px;" viewBox="0 0 24 24"><path fill="#c10f22" d="M19,4H15.5L14.5,3H9.5L8.5,4H5V6H19M6,19A2,2 0 0,0 8,21H16A2,2 0 0,0 18,19V7H6V19Z"/></svg>
<div class="abs" style="left:312px;top:363px;width:1274px;height:1px;background:#e0e0e0"></div>
<div class="abs" style="left:328px;top:364px;height:38px;display:flex;align-items:center;white-space:nowrap;font-size:12.5px;line-height:19px;color:#333"><div>Data achitarii<br>drepturilor salariale</div></div>
<div class="abs" style="left:474px;top:364px;height:38px;display:flex;align-items:center;white-space:nowrap;font-size:12.5px;line-height:19px;color:#333"><div>Text</div></div>
<div class="abs" style="left:604px;top:364px;height:38px;display:flex;align-items:center;white-space:nowrap;font-size:12.5px;line-height:19px;color:#333"><div>Contract<br>angajat</div></div>
<div class="abs" style="left:704px;top:364px;height:38px;display:flex;align-items:center;white-space:nowrap;font-size:12.5px;line-height:19px;color:#333"><div>Inregistrare, Modificare, Corectie, Corectie istoric, Adaugare<br>istoric</div></div>
<svg class="ic" style="left:1089.8999999999999px;top:373.4px;width:18.8px;height:18.8px;" viewBox="0 0 24 24"><path fill="#4caf50" d="M12 2C6.5 2 2 6.5 2 12S6.5 22 12 22 22 17.5 22 12 17.5 2 12 2M10 17L5 12L6.41 10.59L10 14.17L17.59 6.58L19 8L10 17Z"/></svg>
<svg class="ic" style="left:1209.1px;top:373.4px;width:18.8px;height:18.8px;" viewBox="0 0 24 24"><path fill="#4caf50" d="M12 2C6.5 2 2 6.5 2 12S6.5 22 12 22 22 17.5 22 12 17.5 2 12 2M10 17L5 12L6.41 10.59L10 14.17L17.59 6.58L19 8L10 17Z"/></svg>
<div class="abs" style="left:1288px;top:364px;height:38px;display:flex;align-items:center;white-space:nowrap;font-size:12.5px;line-height:19px;color:#333"><div>01.02.2026,<br>21:50</div></div>
<div class="abs" style="left:1393px;top:364px;height:38px;display:flex;align-items:center;white-space:nowrap;font-size:12.5px;line-height:19px;color:#333"><div>01.02.2026,<br>21:50</div></div>
<div class="abs" style="left:1506px;top:366.5px;width:62px;height:31px;border:1px solid #dcdcdc;border-radius:4px"></div>
<div class="abs" style="left:1537px;top:366.5px;width:1px;height:33px;background:#dcdcdc"></div>
<svg class="ic" style="left:1515px;top:375.5px;width:14px;height:14px;" viewBox="0 0 24 24"><path fill="#1e5fb4" d="M20.71,7.04C21.1,6.65 21.1,6 20.71,5.63L18.37,3.29C18,2.9 17.35,2.9 16.96,3.29L15.12,5.12L18.87,8.87M3,17.25V21H6.75L17.81,9.93L14.06,6.18L3,17.25Z"/></svg>
<svg class="ic" style="left:1546px;top:375.5px;width:14px;height:14px;" viewBox="0 0 24 24"><path fill="#c10f22" d="M19,4H15.5L14.5,3H9.5L8.5,4H5V6H19M6,19A2,2 0 0,0 8,21H16A2,2 0 0,0 18,19V7H6V19Z"/></svg>
<div class="abs" style="left:312px;top:402px;width:1274px;height:1px;background:#e0e0e0"></div>
<div class="abs" style="left:328px;top:403px;height:37px;display:flex;align-items:center;white-space:nowrap;font-size:12.5px;line-height:19px;color:#333"><div>Perioada de proba</div></div>
<div class="abs" style="left:474px;top:403px;height:37px;display:flex;align-items:center;white-space:nowrap;font-size:12.5px;line-height:19px;color:#333"><div>Numeric</div></div>
<div class="abs" style="left:604px;top:403px;height:37px;display:flex;align-items:center;white-space:nowrap;font-size:12.5px;line-height:19px;color:#333"><div>Contract<br>angajat</div></div>
<div class="abs" style="left:704px;top:403px;height:37px;display:flex;align-items:center;white-space:nowrap;font-size:12.5px;line-height:19px;color:#333"><div>Inregistrare, Modificare, Corectie, Corectie istoric, Adaugare<br>istoric</div></div>
<svg class="ic" style="left:1089.8999999999999px;top:411.9px;width:18.8px;height:18.8px;" viewBox="0 0 24 24"><path fill="#4caf50" d="M12 2C6.5 2 2 6.5 2 12S6.5 22 12 22 22 17.5 22 12 17.5 2 12 2M10 17L5 12L6.41 10.59L10 14.17L17.59 6.58L19 8L10 17Z"/></svg>
<svg class="ic" style="left:1209.1px;top:411.9px;width:18.8px;height:18.8px;" viewBox="0 0 24 24"><path fill="#4caf50" d="M12 2C6.5 2 2 6.5 2 12S6.5 22 12 22 22 17.5 22 12 17.5 2 12 2M10 17L5 12L6.41 10.59L10 14.17L17.59 6.58L19 8L10 17Z"/></svg>
<div class="abs" style="left:1288px;top:403px;height:37px;display:flex;align-items:center;white-space:nowrap;font-size:12.5px;line-height:19px;color:#333"><div>01.02.2026,<br>21:50</div></div>
<div class="abs" style="left:1393px;top:403px;height:37px;display:flex;align-items:center;white-space:nowrap;font-size:12.5px;line-height:19px;color:#333"><div>01.02.2026,<br>21:50</div></div>
<div class="abs" style="left:1506px;top:405.0px;width:62px;height:31px;border:1px solid #dcdcdc;border-radius:4px"></div>
<div class="abs" style="left:1537px;top:405.0px;width:1px;height:33px;background:#dcdcdc"></div>
<svg class="ic" style="left:1515px;top:414.0px;width:14px;height:14px;" viewBox="0 0 24 24"><path fill="#1e5fb4" d="M20.71,7.04C21.1,6.65 21.1,6 20.71,5.63L18.37,3.29C18,2.9 17.35,2.9 16.96,3.29L15.12,5.12L18.87,8.87M3,17.25V21H6.75L17.81,9.93L14.06,6.18L3,17.25Z"/></svg>
<svg class="ic" style="left:1546px;top:414.0px;width:14px;height:14px;" viewBox="0 0 24 24"><path fill="#c10f22" d="M19,4H15.5L14.5,3H9.5L8.5,4H5V6H19M6,19A2,2 0 0,0 8,21H16A2,2 0 0,0 18,19V7H6V19Z"/></svg>
<div class="abs" style="left:312px;top:440px;width:1274px;height:1px;background:#e0e0e0"></div>
<div class="abs" style="left:328px;top:441px;height:57px;display:flex;align-items:center;white-space:nowrap;font-size:12.5px;line-height:19px;color:#333"><div>Punct de lucru</div></div>
<div class="abs" style="left:474px;top:441px;height:57px;display:flex;align-items:center;white-space:nowrap;font-size:12.5px;line-height:19px;color:#333"><div>Punct de lucru<br>(configuratii<br>companie)</div></div>
<div class="abs" style="left:604px;top:441px;height:57px;display:flex;align-items:center;white-space:nowrap;font-size:12.5px;line-height:19px;color:#333"><div>Contract<br>angajat</div></div>
<div class="abs" style="left:704px;top:441px;height:57px;display:flex;align-items:center;white-space:nowrap;font-size:12.5px;line-height:19px;color:#333"><div>Inregistrare, Modificare, Corectie, Corectie istoric, Adaugare<br>istoric</div></div>
<svg class="ic" style="left:1089.8999999999999px;top:459.9px;width:18.8px;height:18.8px;" viewBox="0 0 24 24"><path fill="#4caf50" d="M12 2C6.5 2 2 6.5 2 12S6.5 22 12 22 22 17.5 22 12 17.5 2 12 2M10 17L5 12L6.41 10.59L10 14.17L17.59 6.58L19 8L10 17Z"/></svg>
<svg class="ic" style="left:1209.1px;top:459.9px;width:18.8px;height:18.8px;" viewBox="0 0 24 24"><path fill="#4caf50" d="M12 2C6.5 2 2 6.5 2 12S6.5 22 12 22 22 17.5 22 12 17.5 2 12 2M10 17L5 12L6.41 10.59L10 14.17L17.59 6.58L19 8L10 17Z"/></svg>
<div class="abs" style="left:1288px;top:441px;height:57px;display:flex;align-items:center;white-space:nowrap;font-size:12.5px;line-height:19px;color:#333"><div>01.02.2026,<br>21:50</div></div>
<div class="abs" style="left:1393px;top:441px;height:57px;display:flex;align-items:center;white-space:nowrap;font-size:12.5px;line-height:19px;color:#333"><div>01.02.2026,<br>21:50</div></div>
<div class="abs" style="left:1506px;top:453.0px;width:62px;height:31px;border:1px solid #dcdcdc;border-radius:4px"></div>
<div class="abs" style="left:1537px;top:453.0px;width:1px;height:33px;background:#dcdcdc"></div>
<svg class="ic" style="left:1515px;top:462.0px;width:14px;height:14px;" viewBox="0 0 24 24"><path fill="#1e5fb4" d="M20.71,7.04C21.1,6.65 21.1,6 20.71,5.63L18.37,3.29C18,2.9 17.35,2.9 16.96,3.29L15.12,5.12L18.87,8.87M3,17.25V21H6.75L17.81,9.93L14.06,6.18L3,17.25Z"/></svg>
<svg class="ic" style="left:1546px;top:462.0px;width:14px;height:14px;" viewBox="0 0 24 24"><path fill="#c10f22" d="M19,4H15.5L14.5,3H9.5L8.5,4H5V6H19M6,19A2,2 0 0,0 8,21H16A2,2 0 0,0 18,19V7H6V19Z"/></svg>
<div class="abs" style="left:312px;top:498px;width:1274px;height:1px;background:#e0e0e0"></div>
<div class="abs" style="left:328px;top:499px;height:94px;display:flex;align-items:center;white-space:nowrap;font-size:12.5px;line-height:19px;color:#333"><div>Numar cerere<br>angajat</div></div>
<div class="abs" style="left:474px;top:499px;height:94px;display:flex;align-items:center;white-space:nowrap;font-size:12.5px;line-height:19px;color:#333"><div>Text</div></div>
<div class="abs" style="left:604px;top:499px;height:94px;display:flex;align-items:center;white-space:nowrap;font-size:12.5px;line-height:19px;color:#333"><div>Contract<br>angajat</div></div>
<div class="abs" style="left:704px;top:499px;height:94px;display:flex;align-items:center;white-space:nowrap;font-size:12.5px;line-height:19px;color:#333"><div>Modificare, Corectie, Corectie istoric, Adaugare istoric,<br>Adaugare suspendare in istoric, Corectie istoric cu suspendare,<br>Suspendare, Corectie suspendare, Modificare suspendare,<br>Incetare suspendare, Corectie incetare suspendare, Incetare,<br>Corectie incetare</div></div>
<svg class="ic" style="left:1090.2px;top:536.5px;width:18.2px;height:18.2px;" viewBox="0 0 24 24"><path fill="#fb8c00" d="M12,2C17.53,2 22,6.47 22,12C22,17.53 17.53,22 12,22C6.47,22 2,17.53 2,12C2,6.47 6.47,2 12,2M15.59,7L12,10.59L8.41,7L7,8.41L10.59,12L7,15.59L8.41,17L12,13.41L15.59,17L17,15.59L13.41,12L17,8.41L15.59,7Z"/></svg>
<svg class="ic" style="left:1209.1px;top:536.4px;width:18.8px;height:18.8px;" viewBox="0 0 24 24"><path fill="#4caf50" d="M12 2C6.5 2 2 6.5 2 12S6.5 22 12 22 22 17.5 22 12 17.5 2 12 2M10 17L5 12L6.41 10.59L10 14.17L17.59 6.58L19 8L10 17Z"/></svg>
<div class="abs" style="left:1288px;top:499px;height:94px;display:flex;align-items:center;white-space:nowrap;font-size:12.5px;line-height:19px;color:#333"><div>01.02.2026,<br>21:50</div></div>
<div class="abs" style="left:1393px;top:499px;height:94px;display:flex;align-items:center;white-space:nowrap;font-size:12.5px;line-height:19px;color:#333"><div>01.02.2026,<br>21:50</div></div>
<div class="abs" style="left:1506px;top:529.5px;width:62px;height:31px;border:1px solid #dcdcdc;border-radius:4px"></div>
<div class="abs" style="left:1537px;top:529.5px;width:1px;height:33px;background:#dcdcdc"></div>
<svg class="ic" style="left:1515px;top:538.5px;width:14px;height:14px;" viewBox="0 0 24 24"><path fill="#1e5fb4" d="M20.71,7.04C21.1,6.65 21.1,6 20.71,5.63L18.37,3.29C18,2.9 17.35,2.9 16.96,3.29L15.12,5.12L18.87,8.87M3,17.25V21H6.75L17.81,9.93L14.06,6.18L3,17.25Z"/></svg>
<svg class="ic" style="left:1546px;top:538.5px;width:14px;height:14px;" viewBox="0 0 24 24"><path fill="#c10f22" d="M19,4H15.5L14.5,3H9.5L8.5,4H5V6H19M6,19A2,2 0 0,0 8,21H16A2,2 0 0,0 18,19V7H6V19Z"/></svg>
<div class="abs" style="left:312px;top:593px;width:1274px;height:1px;background:#e0e0e0"></div>
<div class="abs" style="left:328px;top:594px;height:95px;display:flex;align-items:center;white-space:nowrap;font-size:12.5px;line-height:19px;color:#333"><div>Data cerere angajat</div></div>
<div class="abs" style="left:474px;top:594px;height:95px;display:flex;align-items:center;white-space:nowrap;font-size:12.5px;line-height:19px;color:#333"><div>Data</div></div>
<div class="abs" style="left:604px;top:594px;height:95px;display:flex;align-items:center;white-space:nowrap;font-size:12.5px;line-height:19px;color:#333"><div>Contract<br>angajat</div></div>
<div class="abs" style="left:704px;top:594px;height:95px;display:flex;align-items:center;white-space:nowrap;font-size:12.5px;line-height:19px;color:#333"><div>Modificare, Corectie, Corectie istoric, Adaugare istoric,<br>Adaugare suspendare in istoric, Corectie istoric cu suspendare,<br>Suspendare, Corectie suspendare, Modificare suspendare,<br>Incetare suspendare, Corectie incetare suspendare, Incetare,<br>Corectie incetare</div></div>
<svg class="ic" style="left:1090.2px;top:632.0px;width:18.2px;height:18.2px;" viewBox="0 0 24 24"><path fill="#fb8c00" d="M12,2C17.53,2 22,6.47 22,12C22,17.53 17.53,22 12,22C6.47,22 2,17.53 2,12C2,6.47 6.47,2 12,2M15.59,7L12,10.59L8.41,7L7,8.41L10.59,12L7,15.59L8.41,17L12,13.41L15.59,17L17,15.59L13.41,12L17,8.41L15.59,7Z"/></svg>
<svg class="ic" style="left:1209.1px;top:631.9px;width:18.8px;height:18.8px;" viewBox="0 0 24 24"><path fill="#4caf50" d="M12 2C6.5 2 2 6.5 2 12S6.5 22 12 22 22 17.5 22 12 17.5 2 12 2M10 17L5 12L6.41 10.59L10 14.17L17.59 6.58L19 8L10 17Z"/></svg>
<div class="abs" style="left:1288px;top:594px;height:95px;display:flex;align-items:center;white-space:nowrap;font-size:12.5px;line-height:19px;color:#333"><div>01.02.2026,<br>21:50</div></div>
<div class="abs" style="left:1393px;top:594px;height:95px;display:flex;align-items:center;white-space:nowrap;font-size:12.5px;line-height:19px;color:#333"><div>01.02.2026,<br>21:50</div></div>
<div class="abs" style="left:1506px;top:625.0px;width:62px;height:31px;border:1px solid #dcdcdc;border-radius:4px"></div>
<div class="abs" style="left:1537px;top:625.0px;width:1px;height:33px;background:#dcdcdc"></div>
<svg class="ic" style="left:1515px;top:634.0px;width:14px;height:14px;" viewBox="0 0 24 24"><path fill="#1e5fb4" d="M20.71,7.04C21.1,6.65 21.1,6 20.71,5.63L18.37,3.29C18,2.9 17.35,2.9 16.96,3.29L15.12,5.12L18.87,8.87M3,17.25V21H6.75L17.81,9.93L14.06,6.18L3,17.25Z"/></svg>
<svg class="ic" style="left:1546px;top:634.0px;width:14px;height:14px;" viewBox="0 0 24 24"><path fill="#c10f22" d="M19,4H15.5L14.5,3H9.5L8.5,4H5V6H19M6,19A2,2 0 0,0 8,21H16A2,2 0 0,0 18,19V7H6V19Z"/></svg>
<div class="abs" style="left:312px;top:689px;width:1274px;height:1px;background:#e0e0e0"></div>
<div class="abs" style="left:328px;top:690px;height:57px;display:flex;align-items:center;white-space:nowrap;font-size:12.5px;line-height:19px;color:#333"><div>Numar<br>referat/preaviz<br>(Incetare Art. 65.1)</div></div>
<div class="abs" style="left:474px;top:690px;height:57px;display:flex;align-items:center;white-space:nowrap;font-size:12.5px;line-height:19px;color:#333"><div>Text</div></div>
<div class="abs" style="left:604px;top:690px;height:57px;display:flex;align-items:center;white-space:nowrap;font-size:12.5px;line-height:19px;color:#333"><div>Contract<br>angajat</div></div>
<div class="abs" style="left:704px;top:690px;height:57px;display:flex;align-items:center;white-space:nowrap;font-size:12.5px;line-height:19px;color:#333"><div>Incetare, Corectie incetare</div></div>
<svg class="ic" style="left:1090.2px;top:709.0px;width:18.2px;height:18.2px;" viewBox="0 0 24 24"><path fill="#fb8c00" d="M12,2C17.53,2 22,6.47 22,12C22,17.53 17.53,22 12,22C6.47,22 2,17.53 2,12C2,6.47 6.47,2 12,2M15.59,7L12,10.59L8.41,7L7,8.41L10.59,12L7,15.59L8.41,17L12,13.41L15.59,17L17,15.59L13.41,12L17,8.41L15.59,7Z"/></svg>
<svg class="ic" style="left:1209.1px;top:708.9px;width:18.8px;height:18.8px;" viewBox="0 0 24 24"><path fill="#4caf50" d="M12 2C6.5 2 2 6.5 2 12S6.5 22 12 22 22 17.5 22 12 17.5 2 12 2M10 17L5 12L6.41 10.59L10 14.17L17.59 6.58L19 8L10 17Z"/></svg>
<div class="abs" style="left:1288px;top:690px;height:57px;display:flex;align-items:center;white-space:nowrap;font-size:12.5px;line-height:19px;color:#333"><div>01.02.2026,<br>21:50</div></div>
<div class="abs" style="left:1393px;top:690px;height:57px;display:flex;align-items:center;white-space:nowrap;font-size:12.5px;line-height:19px;color:#333"><div>01.02.2026,<br>21:50</div></div>
<div class="abs" style="left:1506px;top:702.0px;width:62px;height:31px;border:1px solid #dcdcdc;border-radius:4px"></div>
<div class="abs" style="left:1537px;top:702.0px;width:1px;height:33px;background:#dcdcdc"></div>
<svg class="ic" style="left:1515px;top:711.0px;width:14px;height:14px;" viewBox="0 0 24 24"><path fill="#1e5fb4" d="M20.71,7.04C21.1,6.65 21.1,6 20.71,5.63L18.37,3.29C18,2.9 17.35,2.9 16.96,3.29L15.12,5.12L18.87,8.87M3,17.25V21H6.75L17.81,9.93L14.06,6.18L3,17.25Z"/></svg>
<svg class="ic" style="left:1546px;top:711.0px;width:14px;height:14px;" viewBox="0 0 24 24"><path fill="#c10f22" d="M19,4H15.5L14.5,3H9.5L8.5,4H5V6H19M6,19A2,2 0 0,0 8,21H16A2,2 0 0,0 18,19V7H6V19Z"/></svg>
<div class="abs" style="left:312px;top:747px;width:1274px;height:1px;background:#e0e0e0"></div>
<div class="abs" style="left:328px;top:748px;height:37px;display:flex;align-items:center;white-space:nowrap;font-size:12.5px;line-height:19px;color:#333"><div>Data referat/preaviz<br>(Incetare Art. 65.1)</div></div>
<div class="abs" style="left:474px;top:748px;height:37px;display:flex;align-items:center;white-space:nowrap;font-size:12.5px;line-height:19px;color:#333"><div>Data</div></div>
<div class="abs" style="left:604px;top:748px;height:37px;display:flex;align-items:center;white-space:nowrap;font-size:12.5px;line-height:19px;color:#333"><div>Contract<br>angajat</div></div>
<div class="abs" style="left:704px;top:748px;height:37px;display:flex;align-items:center;white-space:nowrap;font-size:12.5px;line-height:19px;color:#333"><div>Incetare, Corectie incetare</div></div>
<svg class="ic" style="left:1090.2px;top:757.0px;width:18.2px;height:18.2px;" viewBox="0 0 24 24"><path fill="#fb8c00" d="M12,2C17.53,2 22,6.47 22,12C22,17.53 17.53,22 12,22C6.47,22 2,17.53 2,12C2,6.47 6.47,2 12,2M15.59,7L12,10.59L8.41,7L7,8.41L10.59,12L7,15.59L8.41,17L12,13.41L15.59,17L17,15.59L13.41,12L17,8.41L15.59,7Z"/></svg>
<svg class="ic" style="left:1209.1px;top:756.9px;width:18.8px;height:18.8px;" viewBox="0 0 24 24"><path fill="#4caf50" d="M12 2C6.5 2 2 6.5 2 12S6.5 22 12 22 22 17.5 22 12 17.5 2 12 2M10 17L5 12L6.41 10.59L10 14.17L17.59 6.58L19 8L10 17Z"/></svg>
<div class="abs" style="left:1288px;top:748px;height:37px;display:flex;align-items:center;white-space:nowrap;font-size:12.5px;line-height:19px;color:#333"><div>01.02.2026,<br>21:50</div></div>
<div class="abs" style="left:1393px;top:748px;height:37px;display:flex;align-items:center;white-space:nowrap;font-size:12.5px;line-height:19px;color:#333"><div>01.02.2026,<br>21:50</div></div>
<div class="abs" style="left:1506px;top:750.0px;width:62px;height:31px;border:1px solid #dcdcdc;border-radius:4px"></div>
<div class="abs" style="left:1537px;top:750.0px;width:1px;height:33px;background:#dcdcdc"></div>
<svg class="ic" style="left:1515px;top:759.0px;width:14px;height:14px;" viewBox="0 0 24 24"><path fill="#1e5fb4" d="M20.71,7.04C21.1,6.65 21.1,6 20.71,5.63L18.37,3.29C18,2.9 17.35,2.9 16.96,3.29L15.12,5.12L18.87,8.87M3,17.25V21H6.75L17.81,9.93L14.06,6.18L3,17.25Z"/></svg>
<svg class="ic" style="left:1546px;top:759.0px;width:14px;height:14px;" viewBox="0 0 24 24"><path fill="#c10f22" d="M19,4H15.5L14.5,3H9.5L8.5,4H5V6H19M6,19A2,2 0 0,0 8,21H16A2,2 0 0,0 18,19V7H6V19Z"/></svg>
<div class="abs" style="left:312px;top:785px;width:1274px;height:1px;background:#e0e0e0"></div>
<div class="abs" style="left:328px;top:786px;height:57px;display:flex;align-items:center;white-space:nowrap;font-size:12.5px;line-height:19px;color:#333"><div>Considerente<br>referat (Incetare Art.<br>65.1)</div></div>
<div class="abs" style="left:474px;top:786px;height:57px;display:flex;align-items:center;white-space:nowrap;font-size:12.5px;line-height:19px;color:#333"><div>Selectie multipla</div></div>
<div class="abs" style="left:604px;top:786px;height:57px;display:flex;align-items:center;white-space:nowrap;font-size:12.5px;line-height:19px;color:#333"><div>Contract<br>angajat</div></div>
<div class="abs" style="left:704px;top:786px;height:57px;display:flex;align-items:center;white-space:nowrap;font-size:12.5px;line-height:19px;color:#333"><div>Incetare, Corectie incetare</div></div>
<svg class="ic" style="left:1090.2px;top:805.0px;width:18.2px;height:18.2px;" viewBox="0 0 24 24"><path fill="#fb8c00" d="M12,2C17.53,2 22,6.47 22,12C22,17.53 17.53,22 12,22C6.47,22 2,17.53 2,12C2,6.47 6.47,2 12,2M15.59,7L12,10.59L8.41,7L7,8.41L10.59,12L7,15.59L8.41,17L12,13.41L15.59,17L17,15.59L13.41,12L17,8.41L15.59,7Z"/></svg>
<svg class="ic" style="left:1209.1px;top:804.9px;width:18.8px;height:18.8px;" viewBox="0 0 24 24"><path fill="#4caf50" d="M12 2C6.5 2 2 6.5 2 12S6.5 22 12 22 22 17.5 22 12 17.5 2 12 2M10 17L5 12L6.41 10.59L10 14.17L17.59 6.58L19 8L10 17Z"/></svg>
<div class="abs" style="left:1288px;top:786px;height:57px;display:flex;align-items:center;white-space:nowrap;font-size:12.5px;line-height:19px;color:#333"><div>01.02.2026,<br>21:50</div></div>
<div class="abs" style="left:1393px;top:786px;height:57px;display:flex;align-items:center;white-space:nowrap;font-size:12.5px;line-height:19px;color:#333"><div>01.02.2026,<br>21:50</div></div>
<div class="abs" style="left:1506px;top:798.0px;width:62px;height:31px;border:1px solid #dcdcdc;border-radius:4px"></div>
<div class="abs" style="left:1537px;top:798.0px;width:1px;height:33px;background:#dcdcdc"></div>
<svg class="ic" style="left:1515px;top:807.0px;width:14px;height:14px;" viewBox="0 0 24 24"><path fill="#1e5fb4" d="M20.71,7.04C21.1,6.65 21.1,6 20.71,5.63L18.37,3.29C18,2.9 17.35,2.9 16.96,3.29L15.12,5.12L18.87,8.87M3,17.25V21H6.75L17.81,9.93L14.06,6.18L3,17.25Z"/></svg>
<svg class="ic" style="left:1546px;top:807.0px;width:14px;height:14px;" viewBox="0 0 24 24"><path fill="#c10f22" d="M19,4H15.5L14.5,3H9.5L8.5,4H5V6H19M6,19A2,2 0 0,0 8,21H16A2,2 0 0,0 18,19V7H6V19Z"/></svg>
<div class="abs" style="left:312px;top:843px;width:1274px;height:1px;background:#e0e0e0"></div>
<div class="t" style="left:1085px;top:868.22px;font-size:12.5px;line-height:12.5px;color:#333;font-weight:400;letter-spacing:0px;">Articole pe pagină:</div>
<div class="abs" style="left:1198px;top:854px;width:88px;height:40px;border:1px solid #9e9e9e;border-radius:4px"></div>
<div class="t" style="left:1213.5px;top:864.66px;font-size:16px;line-height:16px;color:#333;font-weight:400;letter-spacing:0.6px;">25</div>
<svg class="ic" style="left:1252px;top:863px;width:22px;height:22px;" viewBox="0 0 24 24"><path fill="#616161" d="M7,10L12,15L17,10H7Z"/></svg>
<div class="t" style="left:1325.5px;top:868.22px;font-size:12.5px;line-height:12.5px;color:#333;font-weight:400;letter-spacing:-0.15px;">1-13 din 13</div>
<svg class="ic" style="left:1413px;top:863px;width:24px;height:24px;" viewBox="0 0 24 24"><path fill="#cdcdcd" d="M18.41,16.59L13.82,12L18.41,7.41L17,6L11,12L17,18L18.41,16.59M6,6H8V18H6V6Z"/></svg>
<svg class="ic" style="left:1458px;top:863px;width:24px;height:24px;" viewBox="0 0 24 24"><path fill="#cdcdcd" d="M15.41,16.58L10.83,12L15.41,7.41L14,6L8,12L14,18L15.41,16.58Z"/></svg>
<svg class="ic" style="left:1504px;top:863px;width:24px;height:24px;" viewBox="0 0 24 24"><path fill="#cdcdcd" d="M8.59,16.58L13.17,12L8.59,7.41L10,6L16,12L10,18L8.59,16.58Z"/></svg>
<svg class="ic" style="left:1548px;top:863px;width:24px;height:24px;" viewBox="0 0 24 24"><path fill="#cdcdcd" d="M5.59,7.41L10.18,12L5.59,16.59L7,18L13,12L7,6L5.59,7.41M16,6H18V18H16V6Z"/></svg>
</body></html>
